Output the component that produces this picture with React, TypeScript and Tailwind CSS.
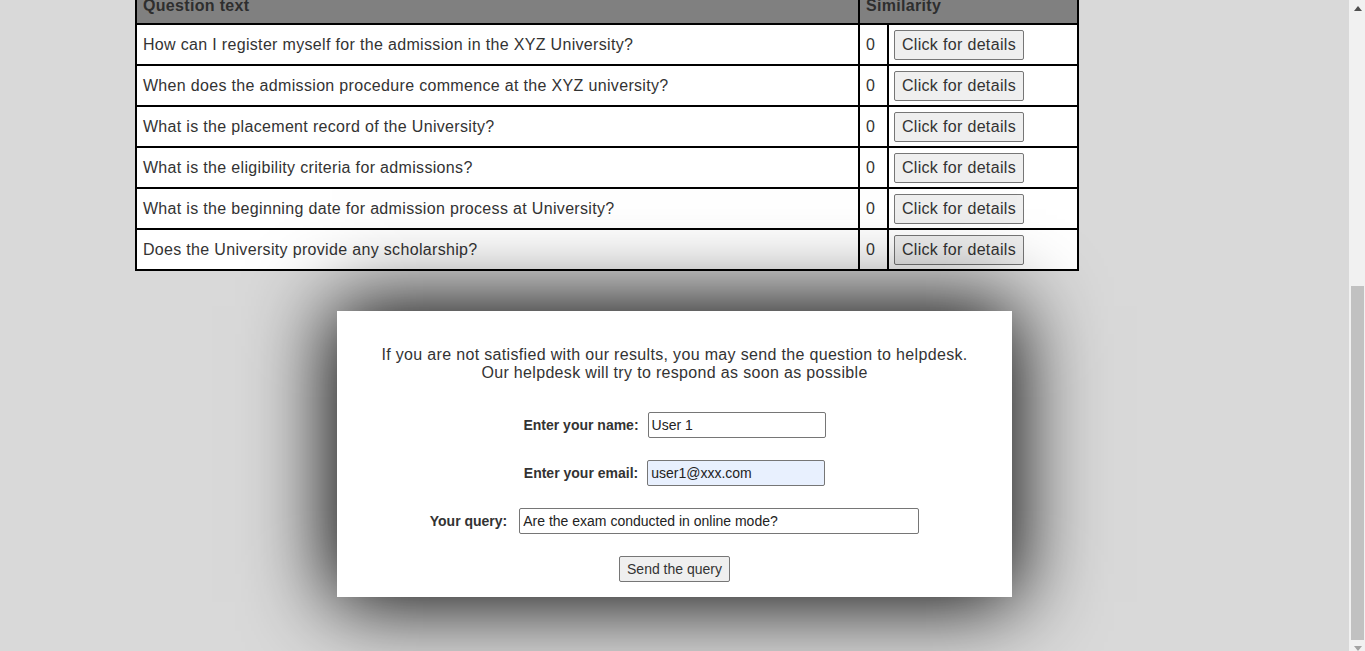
import React from 'react'

const questions = [
  'How can I register myself for the admission in the XYZ University?',
  'When does the admission procedure commence at the XYZ university?',
  'What is the placement record of the University?',
  'What is the eligibility criteria for admissions?',
  'What is the beginning date for admission process at University?',
  'Does the University provide any scholarship?',
]

function ResultsTable() {
  return (
    <table className="ml-[10%] w-[944px] table-fixed border-collapse border-2 border-black tracking-[0.33px]">
      <colgroup>
        <col className="w-[723px]" />
        <col className="w-[29px]" />
        <col />
      </colgroup>
      <thead>
        <tr className="bg-[#808080] text-left text-[#2e2e2e]">
          <th className="border-2 border-black px-1.5 pt-[4px] pb-[5px] font-bold">Question text</th>
          <th colSpan={2} className="border-2 border-black px-1.5 pt-[4px] pb-[5px] font-bold">
            Similarity
          </th>
        </tr>
      </thead>
      <tbody className="bg-white">
        {questions.map((q) => (
          <tr key={q} className="h-[41px]">
            <td className="border-2 border-black px-1.5 align-middle">{q}</td>
            <td className="border-2 border-black px-1.5 align-middle">0</td>
            <td className="border-2 border-black pt-[1px] pr-1.5 pl-[5px] align-middle">
              <button className="h-[30px] rounded-[2px] border border-[#767676] bg-[#efefef] px-[7px] text-[16px] text-[#333]">
                Click for details
              </button>
            </td>
          </tr>
        ))}
      </tbody>
    </table>
  )
}

function HelpdeskForm() {
  return (
    <div className="relative mx-auto mt-[40px] mb-[54px] w-[675px] bg-white px-5 pt-[35px] pb-[15px] shadow-[0_0_80px_5px_#000]">
      <p className="text-center text-[16px] leading-[18px] tracking-[0.33px]">
        If you are not satisfied with our results, you may send the question to helpdesk.
        <br />
        Our helpdesk will try to respond as soon as possible
      </p>
      <div className="mt-[30px] flex flex-col items-center gap-[22px] text-[14px]">
        <div className="flex items-center gap-[9px]">
          <label className="font-bold">Enter your name:</label>
          <input
            defaultValue="User 1"
            className="h-[26px] w-[178px] rounded-[2px] border border-[#767676] bg-white px-[3px] text-[#222] outline-none"
          />
        </div>
        <div className="flex items-center gap-[9px]">
          <label className="font-bold">Enter your email:</label>
          <input
            defaultValue="user1@xxx.com"
            className="h-[26px] w-[178px] rounded-[2px] border border-[#767676] bg-[#e8f0fe] px-[3px] text-[#222] outline-none"
          />
        </div>
        <div className="flex items-center gap-[12px]">
          <label className="font-bold">Your query:</label>
          <input
            defaultValue="Are the exam conducted in online mode?"
            className="h-[26px] w-[400px] rounded-[2px] border border-[#767676] bg-white px-[3px] text-[#222] outline-none"
          />
        </div>
        <button className="h-[26px] rounded-[2px] border border-[#767676] bg-[#efefef] px-[7px] text-[14px] text-[#333]">
          Send the query
        </button>
      </div>
    </div>
  )
}

// the page's vertical scrollbar, scrolled to the bottom
function Scrollbar() {
  return (
    <div className="flex w-[16px] shrink-0 flex-col bg-[#f1f1f1]">
      <div className="flex h-[17px] shrink-0 justify-center pt-[6px] pl-[1px]">
        <svg width="8" height="5" viewBox="0 0 8 5">
          <polygon points="4,0 8,5 0,5" fill="#505050" />
        </svg>
      </div>
      <div className="flex-1" />
      <div className="mr-[1px] ml-[2px] h-[354px] shrink-0 bg-[#c1c1c1]" />
      <div className="flex h-[11px] shrink-0 justify-center pt-[6px] pl-[1px]">
        <svg width="8" height="5" viewBox="0 0 8 5">
          <polygon points="0,0 8,0 4,5" fill="#a3a3a3" />
        </svg>
      </div>
    </div>
  )
}

export default function App() {
  const scroller = React.useRef<HTMLDivElement | null>(null)

  React.useLayoutEffect(() => {
    if (scroller.current) scroller.current.scrollTop = scroller.current.scrollHeight
  }, [])

  return (
    <div className="flex h-screen bg-[#d9d9d9] font-['Liberation_Sans',Arial,sans-serif] text-[16px] text-[#333]">
      <div ref={scroller} className="min-w-0 flex-1 overflow-hidden">
        <div className="flex h-[484px] flex-col items-center justify-center gap-6">
          <h1 className="text-[32px] font-bold">XYZ University Helpdesk</h1>
          <div className="flex items-center gap-2 text-[14px]">
            <label className="font-bold">Ask your question:</label>
            <input
              defaultValue="When are the admission exams?"
              className="h-[26px] w-[400px] rounded-[2px] border border-[#767676] bg-white px-[3px]"
            />
            <button className="h-[26px] rounded-[2px] border border-[#767676] bg-[#efefef] px-[7px]">Search</button>
          </div>
          <p>Questions similar to your query are listed below</p>
        </div>
        <ResultsTable />
        <HelpdeskForm />
      </div>
      <Scrollbar />
    </div>
  )
}
